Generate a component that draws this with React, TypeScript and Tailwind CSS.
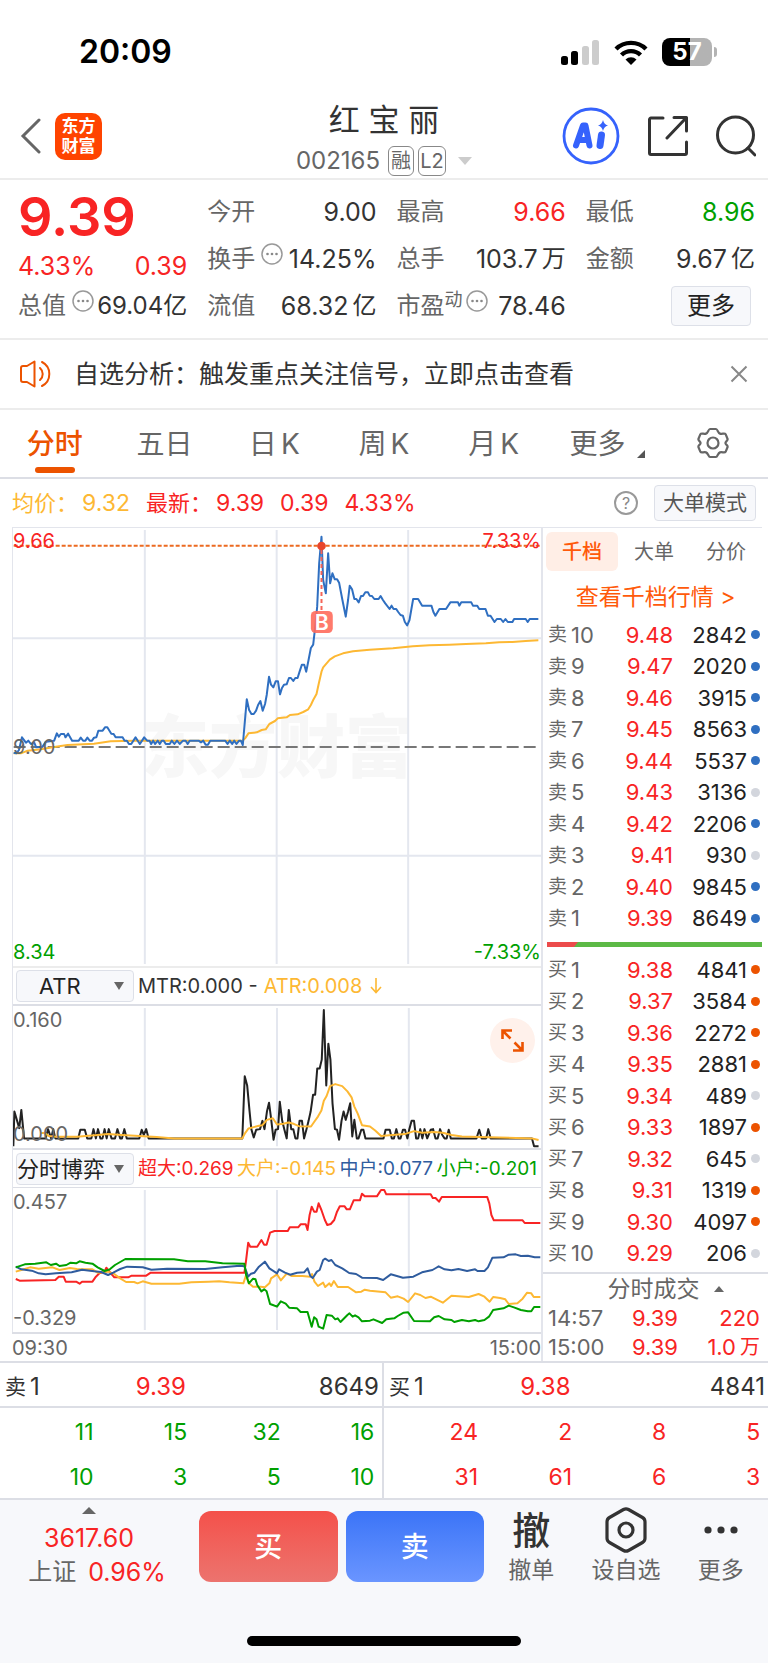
import { useState } from 'react'
import type { ReactNode } from 'react'
import clsx from 'clsx'

type Level = [label: string, price: string, volume: string, dot: string]

const BLUE = 'bg-[#2f6fc1]'
const ORANGE = 'bg-[#ec5300]'
const GREY = 'bg-[#d3d6dd]'

const ASKS: Level[] = [
  ['10', '9.48', '2842', BLUE],
  ['9', '9.47', '2020', BLUE],
  ['8', '9.46', '3915', BLUE],
  ['7', '9.45', '8563', BLUE],
  ['6', '9.44', '5537', BLUE],
  ['5', '9.43', '3136', GREY],
  ['4', '9.42', '2206', BLUE],
  ['3', '9.41', '930', GREY],
  ['2', '9.40', '9845', BLUE],
  ['1', '9.39', '8649', BLUE],
]

const BIDS: Level[] = [
  ['1', '9.38', '4841', ORANGE],
  ['2', '9.37', '3584', ORANGE],
  ['3', '9.36', '2272', ORANGE],
  ['4', '9.35', '2881', ORANGE],
  ['5', '9.34', '489', GREY],
  ['6', '9.33', '1897', ORANGE],
  ['7', '9.32', '645', GREY],
  ['8', '9.31', '1319', ORANGE],
  ['9', '9.30', '4097', ORANGE],
  ['10', '9.29', '206', GREY],
]

const PRICE =
  '38,698 46,700 54,690 63,652 75,668 82,662 90,672 100,668 106,682 125,680 135,665 160,662 168,640 174,650 180,642 190,642 194,652 202,641 214,662 234,662 240,653 247,662 254,662 260,653 267,662 274,662 280,653 287,652 293,632 306,632 313,622 320,622 332,641 339,642 345,652 366,652 372,662 379,662 385,672 392,672 405,652 418,672 431,652 440,662 447,662 452,672 458,662 464,672 472,662 478,672 484,662 490,662 496,672 508,672 514,662 522,672 530,662 538,672 548,662 556,662 562,672 568,662 595,662 602,667 609,662 616,674 623,674 630,662 675,662 682,672 689,662 696,672 702,662 709,672 717,662 722,662 728,675 740,538 747,570 754,582 761,582 768,572 774,555 781,543 788,572 795,552 800,525 807,470 813,494 820,502 827,484 834,484 840,523 846,504 852,494 860,493 867,474 873,474 880,483 886,474 893,474 899,455 906,434 913,434 919,455 926,420 933,384 940,374 945,330 952,260 958,130 965,50 970,180 978,220 985,100 991,190 998,160 1005,178 1012,178 1018,188 1028,240 1038,290 1045,240 1050,197 1057,208 1064,237 1070,237 1077,247 1084,228 1090,228 1097,217 1105,217 1110,227 1117,228 1124,237 1137,237 1143,228 1150,240 1157,250 1170,267 1176,257 1182,267 1190,267 1196,276 1203,285 1210,287 1216,306 1223,316 1230,300 1241,237 1256,237 1268,257 1296,257 1302,276 1308,287 1320,267 1340,267 1353,247 1376,247 1380,257 1386,247 1416,247 1421,257 1434,257 1440,267 1459,267 1466,287 1474,287 1486,306 1493,297 1505,297 1512,306 1519,297 1526,306 1540,306 1545,297 1580,297 1586,306 1592,297 1618,297'

const AVERAGE =
  '38,700 60,700 80,692 120,688 160,681 200,675 280,671 330,664 400,662 728,662 735,655 745,640 770,637 785,630 797,628 808,612 825,603 833,595 860,592 870,585 893,583 910,576 925,568 933,555 940,540 950,522 957,490 965,455 970,442 990,419 1005,409 1030,400 1060,394 1110,389 1180,385 1240,379 1290,376 1350,374 1400,372 1460,370 1500,367 1540,366 1580,363 1618,361'

const MTR =
  '37,560 40,455 54,505 60,450 68,536 130,536 137,508 146,536 152,508 158,536 224,536 230,510 243,510 250,536 262,536 268,508 275,536 281,508 288,536 294,536 300,508 306,536 312,508 320,536 330,536 337,508 345,536 350,536 357,508 364,536 400,536 407,510 413,525 420,508 427,536 500,536 697,536 704,348 711,376 718,455 723,508 730,533 737,510 748,508 755,483 761,508 768,455 774,428 780,476 787,540 793,510 800,508 805,425 812,483 818,508 825,536 831,450 838,508 844,508 850,536 856,536 862,483 869,483 875,536 882,508 888,483 894,455 901,404 907,404 913,325 920,325 926,298 932,148 939,376 945,250 951,298 957,430 964,508 970,510 976,540 983,483 989,455 995,480 1002,455 1008,430 1014,530 1020,480 1027,536 1032,536 1040,510 1046,510 1052,536 1104,536 1110,510 1122,510 1128,536 1134,536 1141,508 1148,536 1153,536 1160,510 1166,510 1173,536 1178,510 1185,483 1192,483 1198,536 1204,536 1210,508 1216,536 1222,508 1230,536 1240,510 1247,508 1254,536 1260,536 1267,508 1273,525 1280,536 1286,536 1292,510 1298,536 1372,536 1380,510 1387,536 1400,536 1406,508 1413,536 1532,536 1538,560 1551,560'

const ATR =
  '118,520 128,520 140,529 160,531 220,531 280,526 310,523 350,526 400,529 450,532 500,536 697,536 705,520 715,506 730,502 745,498 755,496 768,480 785,475 797,494 815,492 830,488 845,492 860,499 895,500 905,485 915,470 925,452 932,422 940,408 950,378 965,372 985,378 1000,394 1012,412 1020,440 1030,462 1042,496 1065,500 1080,512 1097,529 1130,526 1165,523 1192,514 1215,519 1250,517 1275,519 1300,526 1330,530 1380,532 1532,536 1551,541'

const HUGE =
  '44,387 55,392 158,390 168,380 182,380 188,395 218,395 228,401 235,395 265,395 275,380 285,370 300,365 305,353 318,370 328,382 368,382 378,377 420,377 433,368 703,368 708,330 714,278 720,290 740,290 752,270 760,284 767,284 777,248 790,243 828,243 834,232 858,232 865,223 880,223 885,240 891,195 897,170 904,185 911,185 917,160 925,180 935,210 942,225 952,222 962,210 970,185 978,169 992,169 998,178 1007,178 1018,151 1036,151 1042,131 1050,139 1085,139 1092,128 1097,120 1106,120 1112,133 1240,133 1246,144 1254,144 1264,155 1272,141 1403,141 1409,160 1415,195 1422,211 1505,211 1511,219 1556,219'

const LARGE =
  '44,365 60,360 85,352 110,356 150,352 170,360 200,354 220,357 265,358 280,368 310,365 325,370 345,385 362,396 385,396 395,400 410,394 435,401 515,401 550,397 600,395 630,394 660,397 700,400 708,375 716,400 728,410 750,410 762,412 775,400 780,385 797,373 808,391 825,371 840,378 870,378 893,380 898,372 905,395 915,408 930,398 936,411 948,400 953,408 961,393 972,411 1002,411 1025,427 1040,425 1050,419 1065,422 1110,427 1125,443 1145,439 1162,446 1175,456 1195,430 1210,435 1225,444 1240,440 1275,458 1300,437 1350,441 1378,432 1395,440 1410,455 1420,441 1440,444 1455,448 1465,462 1490,460 1505,446 1518,428 1530,430 1537,441 1556,441'

const MEDIUM =
  '44,350 60,358 90,362 110,370 130,373 160,370 205,367 235,359 270,364 290,366 310,375 325,368 345,357 365,350 410,352 435,359 480,356 590,357 640,352 690,347 703,349 714,380 722,371 732,368 745,350 762,335 775,355 797,370 803,358 820,368 835,374 855,368 875,367 885,355 893,378 900,384 912,365 920,360 930,330 936,326 946,333 954,330 965,345 985,355 1005,369 1025,372 1042,383 1085,384 1103,390 1125,373 1150,380 1160,383 1190,380 1215,367 1245,360 1255,354 1263,349 1280,358 1300,361 1320,357 1345,363 1368,358 1375,363 1395,363 1405,352 1418,323 1450,322 1465,314 1485,313 1500,318 1520,317 1540,322 1556,322'

const SMALL =
  '44,352 70,343 100,341 132,337 145,345 160,341 170,348 190,345 202,338 218,340 228,334 245,338 265,341 280,352 300,363 315,358 330,345 345,336 360,327 500,328 540,334 590,334 640,340 703,341 708,375 716,400 728,386 735,388 740,405 752,424 760,418 767,424 777,462 785,465 797,470 808,454 822,461 832,473 855,475 865,486 885,486 897,530 904,502 911,508 917,530 930,536 940,495 955,497 965,508 972,505 980,516 1000,495 1006,490 1015,500 1022,496 1032,502 1042,514 1065,512 1075,508 1100,519 1112,508 1135,505 1145,498 1162,488 1175,487 1192,513 1238,514 1250,502 1263,498 1280,508 1300,510 1308,516 1330,510 1350,514 1368,510 1378,514 1395,510 1408,500 1420,480 1450,475 1465,467 1480,472 1500,480 1520,484 1530,484 1538,471 1556,471'

function Line({ points, color }: { points: string; color: string }) {
  return (
    <polyline
      points={points}
      fill="none"
      stroke={color}
      strokeWidth="2"
      strokeLinejoin="round"
      vectorEffect="non-scaling-stroke"
    />
  )
}

function GridLines({ d }: { d: string }) {
  return <path d={d} stroke="#e4e7ef" strokeWidth="2" fill="none" vectorEffect="non-scaling-stroke" />
}

function StatusBar() {
  return (
    <div className="flex h-[100px] items-center justify-between pl-[79px] pr-[51px] pt-1">
      <span className="text-[32px] font-semibold leading-none text-black">20:09</span>
      <div className="flex items-center gap-[14px]">
        <svg className="h-[25px] w-10" viewBox="0 0 40 25" aria-hidden="true">
          <rect x="1" y="16" width="7" height="9" rx="2.500" fill="#000" />
          <rect x="11" y="11" width="7" height="14" rx="2.500" fill="#000" />
          <rect x="22" y="6" width="7" height="19" rx="2.500" fill="#ccc" />
          <rect x="32" y="0" width="7" height="25" rx="2.500" fill="#ccc" />
        </svg>
        <svg className="h-[25px] w-[34px]" viewBox="0 0 34 25" aria-hidden="true">
          <g fill="none" stroke="#000" strokeWidth="4.400">
            <path d="M2 9a21.500 21.500 0 0 1 30 0" />
            <path d="M7.500 15a13.500 13.500 0 0 1 19 0" />
          </g>
          <path d="M17 25l-5.500-5.600a8 8 0 0 1 11 0z" />
        </svg>
        <div className="flex items-center gap-0.5">
          <div className="flex h-7 w-[50px] items-center justify-center rounded-lg bg-linear-to-r from-black from-57% to-[#b3b3b3] to-57% text-2xl font-bold leading-none text-white">
            57
          </div>
          <div className="h-[10px] w-[3px] rounded-r-full bg-[#b3b3b3]" />
        </div>
      </div>
    </div>
  )
}

function Header() {
  return (
    <header className="flex h-20 items-center border-b-2 border-[#ececec]">
      <div className="flex flex-1 items-center gap-[14px] pb-1.5 pl-5">
        <button type="button" aria-label="返回">
          <svg className="h-9 w-[21px]" viewBox="0 0 21 36" fill="none" stroke="#666" strokeWidth="3" strokeLinecap="round">
            <path d="M19 2L3 18l16 16" />
          </svg>
        </button>
        <div className="grid size-[47px] content-center rounded-[10px] bg-[#ff4400] text-center text-[17px] font-bold leading-5 text-white">
          <span>东方</span>
          <span>财富</span>
        </div>
      </div>
      <div className="flex flex-col items-center gap-1.5 pt-0.5">
        <h1 className="h-9 text-[31px] leading-9 text-[#333]">红 宝 丽</h1>
        <button type="button" className="flex h-[34px] items-center gap-1 text-[#666]">
          <span className="mr-1 text-2xl leading-none">002165</span>
          <span className="flex h-[30px] w-[26px] items-center justify-center rounded-md border border-[#888] text-xl leading-none">融</span>
          <span className="flex h-[30px] w-7 items-center justify-center rounded-md border border-[#888] text-xl leading-none">L2</span>
          <svg className="ml-2 h-2 w-[14px]" viewBox="0 0 14 8" aria-hidden="true">
            <path d="M0 0h14L7 8z" fill="#ccc" />
          </svg>
        </button>
      </div>
      <div className="flex flex-1 items-center justify-end gap-7 pb-1.5 pl-2 pr-3">
        <button type="button" aria-label="AI 助手">
          <svg className="size-[58px]" viewBox="0 0 58 58" fill="none" stroke="#3562fc">
            <circle cx="29" cy="29" r="27" strokeWidth="2.800" />
            <path d="M14 38.500L21 18.500h2.500L27.500 38.500M17.500 33h8" strokeWidth="6" strokeLinejoin="round" strokeLinecap="round" />
            <path d="M39.500 28l-1.500 10.500" strokeWidth="7" strokeLinecap="round" />
            <path d="M41 13c.8 3 2 4.500 5 5.500-3 1-4.200 2.500-5 5.500-.8-3-2-4.500-5-5.500 3-1 4.200-2.500 5-5.500z" fill="#3562fc" stroke="none" />
          </svg>
        </button>
        <button type="button" aria-label="分享">
          <svg className="h-[42px] w-10" viewBox="0 0 40 42" fill="none" stroke="#333" strokeWidth="3" strokeLinecap="round" strokeLinejoin="round">
            <path d="M15 3H3a1.500 1.500 0 0 0-1.500 1.500V38A1.500 1.500 0 0 0 3 39.500h34a1.500 1.500 0 0 0 1.500-1.500V27" />
            <path d="M26 2.500h12.500V16M38 3L19 23" />
          </svg>
        </button>
        <button type="button" aria-label="搜索">
          <svg className="h-[42px] w-10" viewBox="0 0 40 42" fill="none" stroke="#333" strokeWidth="3" strokeLinecap="round">
            <circle cx="19.500" cy="20" r="18" />
            <path d="M32 33l7 7" />
          </svg>
        </button>
      </div>
    </header>
  )
}

function Hint() {
  return (
    <svg className="h-[22px] w-[22px] self-start" viewBox="0 0 22 22" aria-hidden="true">
      <circle cx="11" cy="11" r="10" fill="none" stroke="#999" strokeWidth="1.500" />
      <g fill="#888">
        <circle cx="6.500" cy="11" r="1.300" />
        <circle cx="11" cy="11" r="1.300" />
        <circle cx="15.500" cy="11" r="1.300" />
      </g>
    </svg>
  )
}

interface StatProps {
  label: ReactNode
  value: string
  unit?: string
  hint?: boolean
  tone?: string
}

function Stat({ label, value, unit, hint, tone }: StatProps) {
  return (
    <div className="flex h-8 items-center whitespace-nowrap text-2xl leading-8">
      <dt className="flex h-8 items-center gap-1.5 text-[#666]">
        {label}
        {hint && <Hint />}
      </dt>
      <dd className={clsx('ml-auto flex gap-1 text-[25px]', tone ?? 'text-[#333]')}>
        {value}
        {unit && <span className="text-2xl leading-8">{unit}</span>}
      </dd>
    </div>
  )
}

function Quote() {
  return (
    <section className="grid grid-cols-4 gap-x-5 border-b-2 border-[#ececec] pb-4 pl-[18px] pr-[13px] pt-4">
      <div className="flex flex-col">
        <span className="h-[54px] text-[54px] font-semibold leading-[42px] text-[#f82424]">9.39</span>
        <div className="flex h-8 justify-between text-[25px] leading-8 text-[#f82424]">
          <span>4.33%</span>
          <span>0.39</span>
        </div>
        <div className="mt-2 flex h-8 whitespace-nowrap text-2xl leading-8 text-[#666]">
          总值
          <span className="ml-1.5">
            <Hint />
          </span>
          <span className="ml-auto text-[#333]">69.04亿</span>
        </div>
      </div>
      <dl className="flex flex-col gap-[15px]">
        <Stat label="今开" value="9.00" />
        <Stat label="换手" value="14.25%" hint />
        <Stat label="流值" value="68.32" unit="亿" />
      </dl>
      <dl className="flex flex-col gap-[15px]">
        <Stat label="最高" value="9.66" tone="text-[#f82424]" />
        <Stat label="总手" value="103.7" unit="万" />
        <Stat
          label={
            <span className="flex">
              市盈<sup className="top-0 mr-[3px] text-lg leading-5">动</sup>
              <Hint />
            </span>
          }
          value="78.46"
        />
      </dl>
      <div className="flex flex-col gap-[15px]">
        <dl className="flex flex-col gap-[15px]">
          <Stat label="最低" value="8.96" tone="text-[#00a000]" />
          <Stat label="金额" value="9.67" unit="亿" />
        </dl>
        <div className="flex h-8 items-center justify-end pr-1">
          <button type="button" className="h-10 w-20 rounded border border-[#dde0e8] bg-[#f7f8fb] text-2xl leading-8 text-[#222]">
            更多
          </button>
        </div>
      </div>
    </section>
  )
}

function Notice() {
  return (
    <div className="flex h-[70px] items-center border-b-2 border-[#ececec] px-5">
      <svg className="h-7 w-[33px] shrink-0" viewBox="0 0 33 28" fill="none" stroke="#ec5300" strokeWidth="2" strokeLinecap="round" strokeLinejoin="round" aria-hidden="true">
        <path d="M14.500 1.500v25L7 22H3a2 2 0 0 1-2-2V8a2 2 0 0 1 2-2h4z" />
        <path d="M20 8a8 8 0 0 1 0 12M22 2a13.500 13.500 0 0 1 0 24" />
      </svg>
      <a href="#analysis" className="ml-[21px] whitespace-nowrap text-[25px] leading-8 text-[#333]">
        自选分析：触发重点关注信号，立即点击查看
      </a>
      <button type="button" aria-label="关闭" className="ml-auto">
        <svg className="size-[18px]" viewBox="0 0 18 18" stroke="#888" strokeWidth="2">
          <path d="M1.500 1.500l15 15M16.500 1.500l-15 15" />
        </svg>
      </button>
    </div>
  )
}

const TABS = ['分时', '五日', '日K', '周K', '月K']

function PeriodTabs() {
  const [active, setActive] = useState('分时')
  return (
    <nav className="grid h-[69px] grid-cols-7 border-b-2 border-[#dcdee5] text-[28px] leading-none text-[#666]">
      {TABS.map((tab) => (
        <button
          key={tab}
          type="button"
          onClick={() => setActive(tab)}
          className={clsx('flex flex-col items-center pt-5', tab === active && 'font-medium text-[#ec5300]')}
        >
          <span className="flex h-7 items-center gap-1">
            {tab.replace('K', '')}
            {tab.endsWith('K') && <span>K</span>}
          </span>
          {tab === active && <span className="mt-[9px] h-1.5 w-10 rounded-full bg-[#ec5300]" />}
        </button>
      ))}
      <button type="button" className="flex items-start justify-center gap-3 pl-2 pt-5">
        更多
        <svg className="mt-5 size-2" viewBox="0 0 8 8" aria-hidden="true">
          <path d="M8 0v8H0z" fill="#555" />
        </svg>
      </button>
      <button type="button" aria-label="图表设置" className="flex justify-center pt-[17px]">
        <svg className="size-8" viewBox="0 0 32 32" fill="none" stroke="#666" strokeWidth="2.200" strokeLinejoin="round">
          <path d="M13 2h6c1.600 0 1.800 3.800 4 4.600 2.200.8 4.700-1 5.600.6l2 4.800c.5 1.600-2.200 2.400-2.200 4s2.700 2.400 2.200 4l-2 4.800c-.9 1.600-3.400-.2-5.600.6-2.200.8-2.400 4.600-4 4.600h-6c-1.600 0-1.800-3.800-4-4.600-2.200-.8-4.700 1-5.600-.6l-2-4.800c-.5-1.600 2.200-2.400 2.200-4s-2.700-2.400-2.200-4l2-4.800C4.300 5.600 6.800 7.400 9 6.600 11.200 5.800 11.400 2 13 2z" />
          <circle cx="16" cy="16" r="5.500" />
        </svg>
      </button>
    </nav>
  )
}

function PriceSummary() {
  return (
    <div className="flex h-12 items-center whitespace-nowrap pl-3 pr-3 text-[23px] leading-none">
      <span className="text-[22px] text-[#fdb833]">均价：</span>
      <span className="ml-1 text-[#fdb833]">9.32</span>
      <span className="ml-4 text-[22px] text-[#f82424]">最新：</span>
      <span className="ml-1 text-[#f82424]">9.39</span>
      <span className="ml-4 text-[#f82424]">0.39</span>
      <span className="ml-4 text-[#f82424]">4.33%</span>
      <button type="button" aria-label="说明" className="ml-auto flex size-6 items-center justify-center rounded-full border-2 border-[#999] text-base leading-none text-[#888]">
        ?
      </button>
      <button type="button" className="ml-4 h-9 w-[102px] rounded border border-[#dde0e8] bg-[#f7f8fb] text-[21px] leading-7 text-[#555]">
        大单模式
      </button>
    </div>
  )
}

function PriceChart() {
  return (
    <div className="relative h-[438px]">
      <div className="absolute inset-x-0 top-[184px] text-center text-[68px] font-black leading-[70px] text-[#f7f7f7]">东方财富</div>
      <svg className="absolute inset-0 size-full" viewBox="36 24 1590 1314" preserveAspectRatio="none" aria-label="分时走势">
        <GridLines d="M433 30V1332M830 30V1332M1226 30V1332M36 355H1626M36 1007H1626" />
        <path d="M38 681H1618" stroke="#777" strokeWidth="2" strokeDasharray="12 5" vectorEffect="non-scaling-stroke" />
        <Line points={AVERAGE} color="#fdb833" />
        <Line points={PRICE} color="#2f6fc1" />
        <path d="M38 77H1626" stroke="#ec6a20" strokeWidth="2" strokeDasharray="4 2" vectorEffect="non-scaling-stroke" />
        <path d="M965 90V272" stroke="#f56558" strokeWidth="2" strokeDasharray="4 3" vectorEffect="non-scaling-stroke" />
        <circle cx="965" cy="78" r="13" fill="#e8452c" />
        <rect x="933" y="273" width="66" height="66" rx="14" fill="#ff6b5c" fillOpacity="0.9" />
        <text x="966" y="329" textAnchor="middle" fontSize="64" fontWeight="600" fill="#fff">
          B
        </text>
      </svg>
      <span className="absolute left-0 top-[3px] text-[20px] leading-5 text-[#f82424]">9.66</span>
      <span className="absolute right-0 top-[3px] text-[20px] leading-5 text-[#f82424]">7.33%</span>
      <span className="absolute left-0 top-[209px] text-[20px] leading-5 text-[#666]">9.00</span>
      <span className="absolute bottom-1 left-0 text-[20px] leading-5 text-[#00a000]">8.34</span>
      <span className="absolute bottom-1 right-0 text-[20px] leading-5 text-[#00a000]">-7.33%</span>
    </div>
  )
}

function IndicatorSelect({ label, options, className }: { label: string; options: string[]; className?: string }) {
  return (
    <div className="relative ml-[3px] mr-1 shrink-0">
      <select
        aria-label={label}
        className={clsx(
          'block h-8 w-[118px] appearance-none rounded border border-[#dde0e8] bg-[#f7f8fb] leading-[30px] text-[#222]',
          className,
        )}
      >
        {options.map((o) => (
          <option key={o}>{o}</option>
        ))}
      </select>
      <svg className="pointer-events-none absolute right-[10px] top-3 h-2 w-[10px]" viewBox="0 0 10 8" aria-hidden="true">
        <path d="M0 0h10L5 8z" fill="#666" />
      </svg>
    </div>
  )
}

function Charts() {
  return (
    <div className="ml-3 min-w-0 flex-1">
      <div className="border-l border-t border-[#e3e5ec]">
        <PriceChart />
        <div className="flex h-10 items-center whitespace-nowrap border-b-2 border-t-2 border-b-[#dcdee5] border-t-[#ececec] text-[20px] leading-none">
          <IndicatorSelect label="副图指标一" options={['ATR']} className="pl-[22px] text-[22px]" />
          <span className="text-[#333]">MTR:0.000 -</span>
          <span className="ml-1.5 text-[#fdb833]">ATR:0.008</span>
          <svg className="ml-2 h-4 w-3" viewBox="0 0 12 16" fill="none" stroke="#fdb833" strokeWidth="1.600" aria-hidden="true">
            <path d="M6 0v14M1 9l5 5.500L11 9" />
          </svg>
        </div>
        <div className="relative h-[142px]">
          <svg className="absolute inset-0 size-full" viewBox="36 136 1522 429" preserveAspectRatio="none" aria-label="ATR">
            <GridLines d="M416 142V560M797 142V560M1177 142V560" />
            <Line points={MTR} color="#222" />
            <Line points={ATR} color="#fdb833" />
          </svg>
          <span className="absolute left-0 top-1 text-[20px] leading-5 text-[#666]">0.160</span>
          <span className="absolute bottom-1 left-0 text-[20px] leading-5 text-[#666]">0.000</span>
          <button type="button" aria-label="展开" className="absolute right-1.5 top-3 flex size-[45px] items-center justify-center rounded-full bg-[#fff1eb]">
            <svg className="size-[23px]" viewBox="0 0 23 23" fill="none" stroke="#ec5300" strokeWidth="2.600">
              <path d="M1.500 10V1.500H11M2 2l7.500 7.500M21.500 13v8.500H12M21 21l-7.500-7.500" />
            </svg>
          </button>
        </div>
        <div className="flex h-10 items-center whitespace-nowrap border-b border-t-2 border-b-[#dcdee5] border-t-[#dcdee5] text-[19px] leading-none">
          <IndicatorSelect label="副图指标二" options={['分时博弈']} className="text-[22px]" />
          <div className="flex min-w-0 flex-1 justify-between pr-1">
            <span className="text-[#f82424]">超大:0.269</span>
            <span className="text-[#fdb833]">大户:-0.145</span>
            <span className="text-[#2f5c9e]">中户:0.077</span>
            <span className="text-[#00a000]">小户:-0.201</span>
          </div>
        </div>
        <div className="relative h-[144px]">
          <svg className="absolute inset-0 size-full" viewBox="36 114 1522 432" preserveAspectRatio="none" aria-label="分时博弈">
            <GridLines d="M416 120V540M797 120V540M1177 120V540" />
            <Line points={HUGE} color="#f82424" />
            <Line points={LARGE} color="#fdb833" />
            <Line points={MEDIUM} color="#2f5c9e" />
            <Line points={SMALL} color="#00a000" />
          </svg>
          <span className="absolute left-0 top-1 text-[20px] leading-5 text-[#666]">0.457</span>
          <span className="absolute bottom-1 left-0 text-[20px] leading-5 text-[#666]">-0.329</span>
        </div>
      </div>
      <div className="flex h-[29px] items-center justify-between border-t-2 border-[#dcdee5] text-[20px] leading-6 text-[#666]">
        <span>09:30</span>
        <span>15:00</span>
      </div>
    </div>
  )
}

function DepthTable({ side, levels }: { side: string; levels: Level[] }) {
  return (
    <table className="h-[315px] w-full table-fixed leading-none text-[#666]">
      <tbody>
        {levels.map(([n, price, volume, dot]) => (
          <tr key={n}>
            <th scope="row" className="w-16 whitespace-nowrap pl-[5px] text-left text-[22px] font-normal">
              <span className="flex items-center gap-1">
                <span className="text-[19px]">{side}</span>
                {n}
              </span>
            </th>
            <td className="text-right text-[22px] text-[#f82424]">{price}</td>
            <td className="w-[74px] text-right text-[22px] text-[#222]">{volume}</td>
            <td className="w-[21px] pl-1">
              <span className={clsx('block size-[9px] rounded-full', dot)} />
            </td>
          </tr>
        ))}
      </tbody>
    </table>
  )
}

function OrderBook() {
  return (
    <aside className="flex w-[227px] shrink-0 flex-col border-l-2 border-[#e3e5ec]">
      <div className="mr-1.5 grid grid-cols-3 border-t border-[#e3e5ec] pl-[3px] pt-1 text-[20px] leading-7 text-[#666]">
        <button type="button" className="h-[39px] rounded-md bg-[#ffeee6] font-medium text-[#ff5a0a]">千档</button>
        <button type="button" className="h-[39px]">大单</button>
        <button type="button" className="h-[39px]">分价</button>
      </div>
      <a href="#depth" className="flex h-12 items-center justify-center pt-1 text-[23px] leading-8 text-[#ff5a0a]">
        查看千档行情 &gt;
      </a>
      <DepthTable side="卖" levels={ASKS} />
      <div className="flex h-5 items-center pl-1 pr-1.5">
        <svg className="h-[5px] w-full" viewBox="0 0 215 5" preserveAspectRatio="none" aria-label="买卖盘对比">
          <path d="M0 0h215v5H0z" fill="#5cb946" />
          <path d="M0 0h31l-4 5H0z" fill="#ec4b4b" />
        </svg>
      </div>
      <DepthTable side="买" levels={BIDS} />
      <button type="button" className="mt-[3px] flex h-8 items-center justify-center gap-3.5 border-t-2 border-[#dcdee5] pl-5 text-[23px] leading-7 text-[#666]">
        分时成交
        <svg className="h-1.5 w-[10px]" viewBox="0 0 10 6" aria-hidden="true">
          <path d="M0 6h10L5 0z" fill="#666" />
        </svg>
      </button>
      <table className="w-full flex-1 text-[22px] leading-none text-[#f82424]">
        <tbody>
          <tr className="h-7">
            <th scope="row" className="w-16 pl-[5px] text-left font-normal text-[#666]">14:57</th>
            <td className="text-right">9.39</td>
            <td className="w-[90px] pr-2 text-right">220</td>
          </tr>
          <tr className="h-7">
            <th scope="row" className="w-16 pl-[5px] text-left font-normal text-[#666]">15:00</th>
            <td className="text-right">9.39</td>
            <td className="w-[90px] pr-2">
              <span className="flex items-center justify-end gap-1">
                1.0<span className="text-[20px]">万</span>
              </span>
            </td>
          </tr>
        </tbody>
      </table>
    </aside>
  )
}

interface QueuePanelProps {
  side: string
  price: string
  volume: string
  rows: string[][]
  tone: string
}

function QueuePanel({ side, price, volume, rows, tone }: QueuePanelProps) {
  return (
    <div className="border-[#dcdee5] first:border-r-2">
      <div className="grid h-[45px] grid-cols-3 items-center border-b-2 border-[#dcdee5] pl-[5px] pr-[3px] pt-1 text-2xl leading-none text-[#333]">
        <span className="flex items-center gap-1">
          <span className="text-[21px]">{side}</span>1
        </span>
        <span className="pl-1.5 text-[#f82424]">{price}</span>
        <span className="text-right">{volume}</span>
      </div>
      <table className={clsx('w-[98%] table-fixed text-[23px] leading-none', tone)}>
        <tbody>
          {rows.map((row, i) => (
            <tr key={i} className="h-[45px]">
              {row.map((cell, j) => (
                <td key={j} className="pt-1 text-right">{cell}</td>
              ))}
            </tr>
          ))}
        </tbody>
      </table>
    </div>
  )
}

function BottomBar() {
  return (
    <footer className="border-t-2 border-[#dcdee5] bg-[#f7f8fb]">
      <div className="flex h-[92px] pl-5">
        <a href="#index" className="flex w-[138px] shrink-0 flex-col items-center pt-[7px] text-[25px] leading-6">
          <svg className="h-[7px] w-[14px]" viewBox="0 0 14 7" aria-hidden="true">
            <path d="M0 7h14L7 0z" fill="#666" />
          </svg>
          <span className="mt-3 text-[#f82424]">3617.60</span>
          <span className="ml-4 mt-2.5 flex gap-3 whitespace-nowrap">
            <span className="text-2xl leading-6 text-[#666]">上证</span>
            <span className="text-[#f82424]">0.96%</span>
          </span>
        </a>
        <div className="ml-[41px] flex flex-1 gap-2 pt-[11px] text-[28px] font-medium leading-9 text-white">
          <button type="button" className="h-[71px] flex-1 rounded-xl bg-linear-to-b from-[#f4504a] to-[#ec736e]">买</button>
          <button type="button" className="h-[71px] flex-1 rounded-xl bg-linear-to-b from-[#3b74f7] to-[#6a95ff]">卖</button>
        </div>
        <div className="grid w-[284px] shrink-0 grid-cols-3 text-[23px] leading-6 text-[#666]">
          <button type="button" className="flex flex-col items-center pt-[5px]">
            <span className="mb-[3px] flex h-[50px] items-center text-[38px] font-medium leading-none text-[#333]">撤</span>
            撤单
          </button>
          <button type="button" className="flex flex-col items-center pt-[5px]">
            <span className="mb-[3px] flex h-[50px] items-center">
              <svg className="h-[46px] w-[42px]" viewBox="0 0 42 46" fill="none" stroke="#333" strokeWidth="3.200" strokeLinejoin="round">
                <path d="M18.500 2.500a5 5 0 0 1 5 0l14 8a5 5 0 0 1 2.500 4.300v16.400a5 5 0 0 1-2.500 4.300l-14 8a5 5 0 0 1-5 0l-14-8A5 5 0 0 1 2 31.200V14.800a5 5 0 0 1 2.500-4.300z" />
                <circle cx="21" cy="23" r="7" />
              </svg>
            </span>
            设自选
          </button>
          <button type="button" className="flex flex-col items-center pt-[5px]">
            <span className="mb-[3px] flex h-[50px] items-center">
              <svg className="h-2 w-[34px]" viewBox="0 0 34 8" fill="#333">
                <circle cx="4" cy="4" r="3.600" />
                <circle cx="17" cy="4" r="3.600" />
                <circle cx="30" cy="4" r="3.600" />
              </svg>
            </span>
            更多
          </button>
        </div>
      </div>
      <div className="flex justify-center pb-[17px] pt-11">
        <div className="h-[10px] w-[274px] rounded-full bg-black" />
      </div>
    </footer>
  )
}

export default function App() {
  return (
    <div lang="zh-CN" className="w-full bg-white font-['Inter','Noto_Sans_CJK_SC',sans-serif]">
      <StatusBar />
      <Header />
      <Quote />
      <Notice />
      <PeriodTabs />
      <PriceSummary />
      <div className="flex border-b-2 border-[#dcdee5]">
        <Charts />
        <OrderBook />
      </div>
      <div className="grid grid-cols-2">
        <QueuePanel side="卖" price="9.39" volume="8649" tone="text-[#00a000]" rows={[['11', '15', '32', '16'], ['10', '3', '5', '10']]} />
        <QueuePanel side="买" price="9.38" volume="4841" tone="text-[#f82424]" rows={[['24', '2', '8', '5'], ['31', '61', '6', '3']]} />
      </div>
      <BottomBar />
    </div>
  )
}
